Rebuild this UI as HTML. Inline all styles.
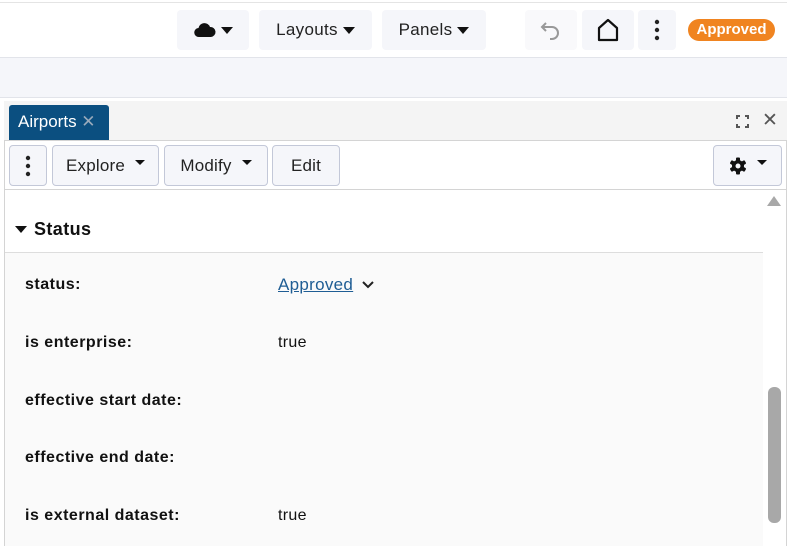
<!DOCTYPE html>
<html><head><style>
*{box-sizing:border-box;margin:0;padding:0}
body{width:787px;height:546px;overflow:hidden;background:#fff;font-family:"Liberation Sans",sans-serif;color:#111;position:relative}
.a{position:absolute}
.btn{position:absolute;background:#f5f6fa;border-radius:4px;display:flex;align-items:center;justify-content:center;font-size:17px;color:#222;letter-spacing:0.3px}
.tb{position:absolute;top:145px;height:41px;background:#f5f6fa;border:1px solid #c3c8d8;border-radius:4px;display:flex;align-items:center;justify-content:center;font-size:17px;color:#222;letter-spacing:0.2px}
.car{display:inline-block;width:0;height:0;border-left:6px solid transparent;border-right:6px solid transparent;border-top:7px solid #111;margin-left:5px}
.cs{display:inline-block;width:0;height:0;border-left:5px solid transparent;border-right:5px solid transparent;border-top:5px solid #111;margin-left:10px;position:relative;top:-3px}
.lbl{position:absolute;left:25px;font-weight:bold;font-size:16px;letter-spacing:0.5px}
.val{position:absolute;left:278px;font-size:16px;letter-spacing:0.3px}
</style></head><body>
<div class="a" style="left:0;top:0;width:787px;height:3px;border-bottom:1px solid #e4e4e4"></div>
<div class="btn" style="left:177px;top:10px;width:72px;height:40px">
<svg width="22" height="16" viewBox="0 0 22 16"><path d="M5 15a4.5 4.5 0 0 1-.5-9A6 6 0 0 1 16 5a4.5 4.5 0 0 1 1 10z" fill="#111"/></svg><span class="car"></span></div>
<div class="btn" style="left:259px;top:10px;width:113px;height:40px">Layouts<span class="car"></span></div>
<div class="btn" style="left:382px;top:10px;width:104px;height:40px">Panels<span class="car"></span></div>
<div class="btn" style="left:525px;top:10px;width:52px;height:40px;background:#f9f9fb">
<svg width="22" height="22" viewBox="0 0 22 22"><path d="M6 4L2 8l4 4M2 8h10a6 6 0 0 1 0 12h-2" fill="none" stroke="#999" stroke-width="2"/></svg></div>
<div class="btn" style="left:582px;top:10px;width:52px;height:40px">
<svg width="24" height="24" viewBox="0 0 24 24"><path d="M3 22V10l9-8 9 8v12z" fill="none" stroke="#111" stroke-width="2.2" stroke-linejoin="round"/></svg></div>
<div class="btn" style="left:638px;top:10px;width:38px;height:40px">
<svg width="6" height="24"><circle cx="3" cy="4" r="2.2" fill="#222"/><circle cx="3" cy="12" r="2.2" fill="#222"/><circle cx="3" cy="20" r="2.2" fill="#222"/></svg></div>
<div class="a" style="left:688px;top:19px;width:87px;height:22px;background:#f08420;border-radius:11px;color:#fff;font-weight:bold;font-size:15px;text-align:center;line-height:22px">Approved</div>
<div class="a" style="left:0;top:57px;width:787px;height:41px;background:#f5f6fa;border-top:1px solid #e2e4ea;border-bottom:1px solid #e2e4ea"></div>
<div class="a" style="left:4px;top:101px;width:783px;height:40px;background:#f4f4f4"></div>
<div class="a" style="left:9px;top:105px;width:100px;height:35px;background:#0b4f80;border-radius:3px 3px 0 0;color:#fff;font-size:17px;line-height:34px;padding-left:9px">Airports <span style="color:#9ab;font-size:17px">✕</span></div>
<svg class="a" style="left:736px;top:115px" width="13" height="13" viewBox="0 0 13 13"><path d="M1 4V1h3M9 1h3v3M12 9v3H9M4 12H1V9" fill="none" stroke="#555" stroke-width="2"/></svg>
<div class="a" style="left:762px;top:109px;font-size:19px;color:#555">✕</div>
<div class="a" style="left:4px;top:140px;width:783px;height:406px;border:1px solid #d4d4d4;border-bottom:none;background:#fff"></div>
<div class="a" style="left:5px;top:189px;width:781px;height:1px;background:#d4d4d4"></div>
<div class="tb" style="left:9px;width:38px"><svg width="6" height="24"><circle cx="3" cy="4" r="2.2" fill="#222"/><circle cx="3" cy="12" r="2.2" fill="#222"/><circle cx="3" cy="20" r="2.2" fill="#222"/></svg></div>
<div class="tb" style="left:52px;width:107px">Explore<span class="cs"></span></div>
<div class="tb" style="left:164px;width:104px">Modify<span class="cs"></span></div>
<div class="tb" style="left:272px;width:68px">Edit</div>
<div class="tb" style="left:713px;width:69px"><svg width="18" height="18" viewBox="0 0 18 18"><g fill="#111"><circle cx="9" cy="9" r="6"/><rect x="7" y="0.5" width="4" height="17" rx="1"/><rect x="7" y="0.5" width="4" height="17" rx="1" transform="rotate(60 9 9)"/><rect x="7" y="0.5" width="4" height="17" rx="1" transform="rotate(120 9 9)"/></g><circle cx="9" cy="9" r="2.5" fill="#f5f6fa"/></svg><span class="cs"></span></div>
<div class="a" style="left:15px;top:226px;width:0;height:0;border-left:6px solid transparent;border-right:6px solid transparent;border-top:7px solid #111"></div>
<div class="a" style="left:34px;top:219px;font-weight:bold;font-size:18px;letter-spacing:0.4px">Status</div>
<div class="a" style="left:5px;top:252px;width:758px;height:294px;background:#fafafa;border-top:1px solid #ddd"></div>
<div class="lbl" style="top:276px">status:</div>
<div class="val" style="top:275px;color:#1f5d94;text-decoration:underline;font-size:17px">Approved</div>
<svg class="a" style="left:361px;top:280px" width="14" height="10"><path d="M2 2l5 5 5-5" fill="none" stroke="#222" stroke-width="2"/></svg>
<div class="lbl" style="top:334px">is enterprise:</div><div class="val" style="top:334px">true</div>
<div class="lbl" style="top:392px">effective start date:</div>
<div class="lbl" style="top:449px">effective end date:</div>
<div class="lbl" style="top:507px">is external dataset:</div><div class="val" style="top:507px">true</div>
<div class="a" style="left:767px;top:196px;width:0;height:0;border-left:7px solid transparent;border-right:7px solid transparent;border-bottom:10px solid #a8a8a8"></div>
<div class="a" style="left:768px;top:387px;width:13px;height:136px;background:#a8a8a8;border-radius:6px"></div>
</body></html>
